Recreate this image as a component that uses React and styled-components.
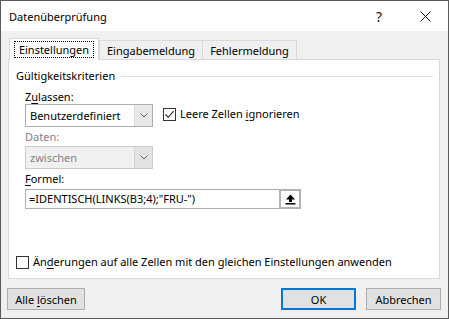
import React from "react";
import styled, { createGlobalStyle } from "styled-components";

const GlobalStyle = createGlobalStyle`
  html, body {
    margin: 0;
    padding: 0;
    background: #f0f0f0;
  }
  body {
    font-family: "Noto Sans", "Open Sans", sans-serif;
    font-size: 11px;
    color: #000;
  }
`;

const Window = styled.div`
  width: 449px;
  height: 319px;
  box-sizing: border-box;
  border: 1px solid #5b5b5b;
  display: flex;
  flex-direction: column;
  background: #f0f0f0;
`;

const TitleBar = styled.div`
  height: 30px;
  background: #fff;
  display: flex;
  align-items: center;
  padding-left: 8px;
`;

const Title = styled.div`
  flex: 1;
  font-size: 11px;
`;

const TitleButton = styled.div`
  width: 46px;
  height: 30px;
  display: flex;
  align-items: center;
  justify-content: center;
  font-size: 14px;
  color: #111;
`;

const Body = styled.div`
  flex: 1;
  display: flex;
  flex-direction: column;
  padding: 7px 8px 0 7px;
`;

const TabStrip = styled.div`
  display: flex;
  align-items: flex-end;
  height: 21px;
  position: relative;
  z-index: 1;
`;

const Tab = styled.div`
  box-sizing: border-box;
  width: ${(p) => p.$w}px;
  height: ${(p) => (p.$active ? 22 : 19)}px;
  margin-bottom: ${(p) => (p.$active ? -1 : 0)}px;
  margin-left: ${(p) => p.$ml || 0}px;
  border: 1px solid #d9d9d9;
  border-bottom: none;
  background: ${(p) => (p.$active ? "#fff" : "#f0f0f0")};
  display: flex;
  align-items: ${(p) => (p.$active ? "flex-start" : "center")};
  justify-content: center;
  padding-top: ${(p) => (p.$active ? 3 : 0)}px;
`;

const Focus = styled.span`
  outline: 1px dotted #000;
  outline-offset: 0;
  padding: 0 4px;
  line-height: 15px;
`;

const Panel = styled.div`
  box-sizing: border-box;
  height: 220px;
  border: 1px solid #d9d9d9;
  background: #fff;
  display: flex;
  flex-direction: column;
  padding: 8px 6px 8px 7px;
`;

const GroupHead = styled.div`
  display: flex;
  align-items: center;
  line-height: 16px;
  gap: 6px;
`;

const GroupLine = styled.div`
  flex: 1;
  height: 1px;
  background: #dcdcdc;
`;

const Content = styled.div`
  padding-left: 9px;
  display: flex;
  flex-direction: column;
`;

const Label = styled.div`
  line-height: 16px;
  margin-top: ${(p) => p.$mt || 0}px;
  color: ${(p) => (p.$disabled ? "#838383" : "#000")};
`;

const Row = styled.div`
  display: flex;
  align-items: flex-start;
  margin-top: ${(p) => p.$mt || 0}px;
`;

const Select = styled.div`
  box-sizing: border-box;
  width: 128px;
  height: 23px;
  border: 1px solid ${(p) => (p.$disabled ? "#cccccc" : "#adadad")};
  background: ${(p) => (p.$disabled ? "#f0f0f0" : "#fff")};
  color: ${(p) => (p.$disabled ? "#838383" : "#000")};
  display: flex;
`;

const SelectText = styled.div`
  flex: 1;
  padding-left: 4px;
  line-height: 21px;
`;

const SelectArrow = styled.div`
  width: 17px;
  border-left: 1px solid ${(p) => (p.$disabled ? "#d4d4d4" : "#dadada")};
  background: ${(p) => (p.$disabled ? "#e3e3e3" : "#e8e8e8")};
  display: flex;
  align-items: center;
  justify-content: center;
`;

const Check = styled.label`
  display: flex;
  align-items: center;
  gap: 4px;
  line-height: 16px;
  margin-left: ${(p) => p.$ml || 0}px;
  margin-top: ${(p) => p.$mt || 0}px;
`;

const Box = styled.span`
  box-sizing: border-box;
  width: 13px;
  height: 13px;
  border: 1px solid #333;
  background: #fff;
  display: flex;
  align-items: center;
  justify-content: center;
`;

const FormulaInput = styled.div`
  box-sizing: border-box;
  width: 276px;
  height: 20px;
  border: 1px solid #adadad;
  display: flex;
  margin-top: 2px;
`;

const FormulaText = styled.div`
  flex: 1;
  padding-left: 3px;
  line-height: 18px;
`;

const CollapseButton = styled.div`
  box-sizing: border-box;
  width: 22px;
  height: 20px;
  margin: -1px -1px 0 0;
  border: 2px solid #b3b3b3;
  background: #fff;
  display: flex;
  align-items: center;
  justify-content: center;
`;

const Bottom = styled.div`
  margin-top: auto;
`;

const Footer = styled.div`
  display: flex;
  align-items: center;
  margin: 9px -1px 0 -1px;
  gap: 10px;
`;

const Button = styled.div`
  box-sizing: border-box;
  width: ${(p) => p.$w}px;
  height: 22px;
  border: ${(p) => (p.$default ? "2px solid #0078d7" : "1px solid #adadad")};
  background: #e1e1e1;
  display: flex;
  align-items: center;
  justify-content: center;
`;

const Spacer = styled.div`
  flex: 1;
`;

const U = styled.span`
  text-decoration: underline;
  text-underline-offset: 2px;
`;

const Chevron = () => (
  <svg width="8" height="5" viewBox="0 0 8 5">
    <path d="M0.5 0.5 L4 4 L7.5 0.5" fill="none" stroke="#606060" strokeWidth="1" />
  </svg>
);

const Tick = () => (
  <svg width="11" height="11" viewBox="0 0 11 11">
    <path d="M1.5 5.5 L4.2 8.3 L9.6 2.2" fill="none" stroke="#222" strokeWidth="1.1" />
  </svg>
);

const UpArrow = () => (
  <svg width="11" height="11" viewBox="0 0 11 11">
    <path d="M5.5 0.5 L10 5.5 L7 5.5 L7 8 L4 8 L4 5.5 L1 5.5 Z" fill="#000" />
    <rect x="0.5" y="9" width="10" height="1.5" fill="#000" />
  </svg>
);

const CloseIcon = () => (
  <svg width="11" height="11" viewBox="0 0 11 11">
    <path d="M0.5 0.5 L10.5 10.5 M10.5 0.5 L0.5 10.5" stroke="#111" strokeWidth="1" />
  </svg>
);

export default function App() {
  return (
    <>
      <GlobalStyle />
      <Window>
        <TitleBar>
          <Title>Datenüberprüfung</Title>
          <TitleButton>?</TitleButton>
          <TitleButton>
            <CloseIcon />
          </TitleButton>
        </TitleBar>
        <Body>
          <TabStrip>
            <Tab $active $w={90} $ml={1}>
              <Focus>Einstellungen</Focus>
            </Tab>
            <Tab $w={104}>Eingabemeldung</Tab>
            <Tab $w={95} $ml={-1}>Fehlermeldung</Tab>
          </TabStrip>
          <Panel>
            <GroupHead>
              <span>Gültigkeitskriterien</span>
              <GroupLine />
            </GroupHead>
            <Content>
              <Label $mt={5}>
                Z<U>u</U>lassen:
              </Label>
              <Row $mt={-1}>
                <Select>
                  <SelectText>Benutzerdefiniert</SelectText>
                  <SelectArrow>
                    <Chevron />
                  </SelectArrow>
                </Select>
                <Check $ml={10} $mt={2}>
                  <Box>
                    <Tick />
                  </Box>
                  <span>
                    Leere Zellen <U>i</U>gnorieren
                  </span>
                </Check>
              </Row>
              <Label $mt={2} $disabled>
                Daten:
              </Label>
              <Row $mt={1}>
                <Select $disabled>
                  <SelectText>zwischen</SelectText>
                  <SelectArrow $disabled>
                    <Chevron />
                  </SelectArrow>
                </Select>
              </Row>
              <Label $mt={2}>
                <U>F</U>ormel:
              </Label>
              <FormulaInput>
                <FormulaText>=IDENTISCH(LINKS(B3;4);"FRU-")</FormulaText>
                <CollapseButton>
                  <UpArrow />
                </CollapseButton>
              </FormulaInput>
            </Content>
            <Bottom>
              <Check>
                <Box />
                <span>
                  Än<U>d</U>erungen auf alle Zellen mit den gleichen Einstellungen anwenden
                </span>
              </Check>
            </Bottom>
          </Panel>
          <Footer>
            <Button $w={78}>
              <span>
                Alle <U>l</U>öschen
              </span>
            </Button>
            <Spacer />
            <Button $w={75} $default>
              OK
            </Button>
            <Button $w={75}>Abbrechen</Button>
          </Footer>
        </Body>
      </Window>
    </>
  );
}
